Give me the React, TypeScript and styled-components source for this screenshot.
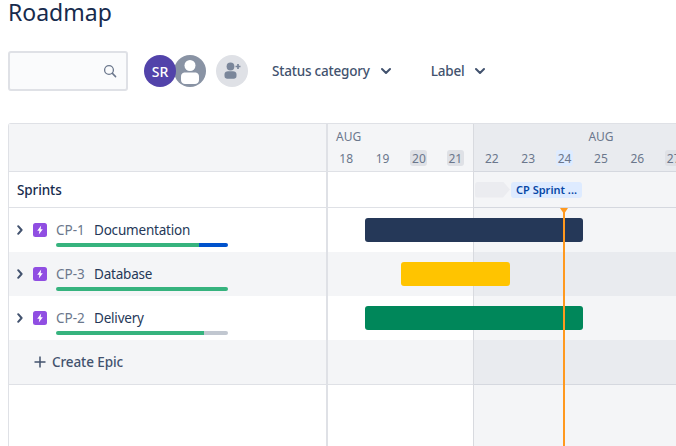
import React from "react";
import styled, { createGlobalStyle } from "styled-components";

const GlobalStyle = createGlobalStyle`
  html, body {
    margin: 0;
    padding: 0;
    height: 100%;
    background: #fff;
    overflow: hidden;
  }
  body {
    font-family: "Noto Sans", "Open Sans", sans-serif;
    color: #172b4d;
  }
`;

const Page = styled.div`
  width: 676px;
  height: 446px;
  padding-left: 8px;
  box-sizing: border-box;
  overflow: hidden;
`;

const Title = styled.h1`
  margin: 0;
  height: 51px;
  font-size: 23px;
  line-height: 24px;
  font-weight: 400;
  color: #172b4d;
`;

const Toolbar = styled.div`
  display: flex;
  align-items: center;
  height: 40px;
`;

const SearchBox = styled.div`
  width: 120px;
  height: 40px;
  box-sizing: border-box;
  border: 2px solid #dfe1e6;
  border-radius: 3px;
  background: #fafbfc;
  display: flex;
  align-items: center;
  justify-content: flex-end;
  padding-right: 9px;
`;

const Avatars = styled.div`
  display: flex;
  margin-left: 16px;
`;

const Avatar = styled.div<{ $bg: string; $overlap?: boolean }>`
  position: relative;
  z-index: ${(p) => (p.$overlap ? 0 : 1)};
  width: 32px;
  height: 32px;
  border-radius: 50%;
  background: ${(p) => p.$bg};
  color: #fff;
  font-size: 14px;
  font-weight: 500;
  display: flex;
  align-items: center;
  justify-content: center;
  overflow: hidden;
  margin-left: ${(p) => (p.$overlap ? "-2px" : "0")};
`;

const AddButton = styled(Avatar)`
  margin-left: 10px;
`;

const Filter = styled.div<{ $gap: number }>`
  display: flex;
  align-items: center;
  gap: 11px;
  margin-left: ${(p) => p.$gap}px;
  font-size: 13.5px;
  letter-spacing: -0.2px;
  font-weight: 500;
  color: #42526e;
`;

const Table = styled.div`
  display: flex;
  margin-top: 32px;
  height: 323px;
  border-top: 1px solid #dfe1e6;
  border-top-left-radius: 3px;
  overflow: hidden;
`;

const LeftPane = styled.div`
  flex: none;
  width: 320px;
  box-sizing: border-box;
  border-left: 1px solid #dfe1e6;
  border-right: 2px solid #dfe1e6;
`;

const Timeline = styled.div`
  position: relative;
  flex: none;
  width: 400px;
`;

const WeekShade = styled.div`
  position: absolute;
  left: 145px;
  top: 0;
  bottom: 0;
  right: 0;
  border-left: 1px solid #d8dadf;
  background: rgba(9, 30, 66, 0.045);
`;

const Row = styled.div<{ $height: number; $grey?: boolean; $line?: boolean }>`
  height: ${(p) => p.$height}px;
  box-sizing: border-box;
  background: ${(p) => (p.$grey ? "#f4f5f7" : "#fff")};
  border-bottom: ${(p) => (p.$line ? "1px solid #dfe1e6" : "none")};
`;

const LabelRow = styled(Row)`
  display: flex;
  align-items: center;
  padding-left: 8px;
  font-size: 13.5px;
  letter-spacing: -0.1px;
  font-weight: 500;
  color: #172b4d;
`;

const EpicRow = styled(Row)`
  padding: 12px 0 0 8px;
`;

const EpicLine = styled.div`
  display: flex;
  align-items: center;
  height: 20px;
  font-size: 13.5px;
`;

const Chevron = styled.svg`
  width: 6px;
  height: 10px;
  flex: none;
`;

const EpicBadge = styled.svg`
  width: 14px;
  height: 14px;
  margin-left: 10px;
  flex: none;
`;

const EpicKey = styled.span`
  margin-left: 9px;
  width: 38px;
  color: #6b778c;
`;

const EpicName = styled.span`
  letter-spacing: -0.2px;
  color: #253858;
`;

const Progress = styled.div`
  display: flex;
  width: 172px;
  height: 4px;
  margin: 3px 0 0 39px;
  border-radius: 2px;
  overflow: hidden;
`;

const ProgressPart = styled.div<{ $color: string; $width: number }>`
  width: ${(p) => p.$width}px;
  background: ${(p) => p.$color};
`;

const CreateRow = styled(Row)`
  display: flex;
  align-items: center;
  gap: 6px;
  padding-left: 25px;
  font-size: 13.5px;
  letter-spacing: -0.1px;
  font-weight: 500;
  color: #42526e;
`;

const HeaderRow = styled(Row)`
  display: flex;
`;

const Period = styled.div<{ $days: number; $center?: boolean }>`
  position: relative;
  z-index: 2;
  width: ${(p) => p.$days * 36.4}px;
  flex: none;
  color: #6b778c;
  font-size: 12px;
  text-align: ${(p) => (p.$center ? "center" : "left")};
`;

const Month = styled.div<{ $center?: boolean }>`
  height: 25px;
  line-height: 25px;
  padding-left: ${(p) => (p.$center ? "0" : "8px")};
`;

const Days = styled.div`
  display: flex;
`;

const Day = styled.div`
  width: 36.4px;
  display: flex;
  justify-content: center;
`;

const DayChip = styled.span<{ $kind?: "weekend" | "today" }>`
  width: 17px;
  height: 16px;
  margin-top: 1px;
  line-height: 17px;
  text-align: center;
  border-radius: 3px;
  background: ${(p) =>
    p.$kind === "weekend" ? "#dfe1e6" : p.$kind === "today" ? "#deebff" : "transparent"};
`;

const SprintRow = styled(Row)`
  position: relative;
  display: flex;
  align-items: center;
  gap: 1px;
  padding-left: 147px;
`;

const SprintGhost = styled.div`
  position: relative;
  z-index: 2;
  width: 35px;
  height: 16px;
  background: #ebecf0;
  border-radius: 3px 0 0 3px;
  clip-path: polygon(0 0, 28px 0, 100% 50%, 28px 100%, 0 100%);
`;

const SprintChip = styled.div`
  position: relative;
  z-index: 2;
  width: 71px;
  height: 16px;
  line-height: 16px;
  text-align: center;
  background: #deebff;
  border-radius: 3px;
  color: #0747a6;
  font-size: 11px;
  font-weight: 600;
  white-space: nowrap;
`;

const BarRow = styled(Row)`
  display: flex;
  align-items: center;
`;

const Bar = styled.div<{ $color: string; $left: number; $width: number }>`
  position: relative;
  z-index: 2;
  height: 24px;
  margin-left: ${(p) => p.$left}px;
  width: ${(p) => p.$width}px;
  border-radius: 3px;
  background: ${(p) => p.$color};
`;

const TodayLine = styled.div`
  position: absolute;
  z-index: 3;
  left: 235px;
  top: 84px;
  bottom: 0;
  width: 2px;
  background: #ff991f;

  &::before {
    content: "";
    position: absolute;
    left: -3px;
    top: 0;
    border-left: 4px solid transparent;
    border-right: 4px solid transparent;
    border-top: 6px solid #ff991f;
  }
`;

const epics = [
  {
    key: "CP-1",
    name: "Documentation",
    parts: [
      { color: "#36b37e", width: 143 },
      { color: "#0052cc", width: 29 },
    ],
    bar: { color: "#253858", left: 37, width: 218 },
  },
  {
    key: "CP-3",
    name: "Database",
    parts: [{ color: "#36b37e", width: 172 }],
    bar: { color: "#ffc400", left: 73, width: 109 },
  },
  {
    key: "CP-2",
    name: "Delivery",
    parts: [
      { color: "#36b37e", width: 148 },
      { color: "#c1c7d0", width: 24 },
    ],
    bar: { color: "#00875a", left: 37, width: 218 },
  },
];

const firstDays = [18, 19, 20, 21];
const secondDays = [22, 23, 24, 25, 26, 27];

const dayKind = (day: number): "weekend" | "today" | undefined => {
  if (day === 24) return "today";
  if (day === 20 || day === 21 || day === 27) return "weekend";
  return undefined;
};

const Caret = () => (
  <svg width="10" height="10" viewBox="0 0 10 10">
    <path d="M1 3 L5 7 L9 3" fill="none" stroke="#42526e" strokeWidth="2" strokeLinecap="round" strokeLinejoin="round" />
  </svg>
);

const App: React.FC = () => {
  return (
    <Page>
      <GlobalStyle />
      <Title>Roadmap</Title>

      <Toolbar>
        <SearchBox>
          <svg width="14" height="14" viewBox="0 0 14 14">
            <circle cx="6" cy="6" r="4.4" fill="none" stroke="#6b778c" strokeWidth="1.3" />
            <path d="M9.4 9.4 L12.6 12.6" stroke="#6b778c" strokeWidth="1.5" strokeLinecap="round" />
          </svg>
        </SearchBox>

        <Avatars>
          <Avatar $bg="#5243aa">SR</Avatar>
          <Avatar $bg="#8993a4" $overlap>
            <svg width="32" height="32" viewBox="0 0 32 32">
              <circle cx="16" cy="10.5" r="5.5" fill="#fff" />
              <path d="M7 22 C7 18.5 9 17.5 11 17.5 H21 C23 17.5 25 18.5 25 22 V25 C25 27.5 23 29 21 29 H11 C9 29 7 27.5 7 25 Z" fill="#fff" />
            </svg>
          </Avatar>
        </Avatars>

        <AddButton $bg="#dfe1e6">
          <svg width="22" height="22" viewBox="0 0 22 22">
            <circle cx="9.5" cy="6.5" r="3.9" fill="#7a869a" />
            <path d="M3.5 14.5 C3.5 12 5 11.2 7 11.2 H12 C14 11.2 15.5 12 15.5 14.5 V16 C15.5 17.8 14.3 18.8 12.8 18.8 H6.2 C4.7 18.8 3.5 17.8 3.5 16 Z" fill="#7a869a" />
            <path d="M17 4 V9 M14.5 6.5 H19.5" stroke="#7a869a" strokeWidth="1.7" />
          </svg>
        </AddButton>

        <Filter $gap={24}>
          Status category
          <Caret />
        </Filter>
        <Filter $gap={40}>
          Label
          <Caret />
        </Filter>
      </Toolbar>

      <Table>
        <LeftPane>
          <Row $height={48} $grey $line />
          <LabelRow $height={36} $line>Sprints</LabelRow>
          {epics.map((epic, i) => (
            <EpicRow key={epic.key} $height={44} $grey={i === 1}>
              <EpicLine>
                <Chevron viewBox="0 0 6 10">
                  <path d="M1.2 1.2 L4.6 5 L1.2 8.8" fill="none" stroke="#42526e" strokeWidth="2" strokeLinecap="round" strokeLinejoin="round" />
                </Chevron>
                <EpicBadge viewBox="0 0 14 14">
                  <rect width="14" height="14" rx="2.5" fill="#904ee2" />
                  <path d="M8.2 2.6 L4.2 7.8 H6.4 L5.8 11.4 L9.8 6.2 H7.6 Z" fill="#fff" />
                </EpicBadge>
                <EpicKey>{epic.key}</EpicKey>
                <EpicName>{epic.name}</EpicName>
              </EpicLine>
              <Progress>
                {epic.parts.map((part) => (
                  <ProgressPart key={part.color} $color={part.color} $width={part.width} />
                ))}
              </Progress>
            </EpicRow>
          ))}
          <CreateRow $height={45} $grey $line>
            <svg width="12" height="12" viewBox="0 0 12 12">
              <path d="M6 0.5 V11.5 M0.5 6 H11.5" stroke="#42526e" strokeWidth="1.5" />
            </svg>
            Create Epic
          </CreateRow>
        </LeftPane>

        <Timeline>
          <HeaderRow $height={48} $grey $line>
            <Period $days={4}>
              <Month>AUG</Month>
              <Days>
                {firstDays.map((day) => (
                  <Day key={day}>
                    <DayChip $kind={dayKind(day)}>{day}</DayChip>
                  </Day>
                ))}
              </Days>
            </Period>
            <Period $days={7} $center>
              <Month $center>AUG</Month>
              <Days>
                {secondDays.map((day) => (
                  <Day key={day}>
                    <DayChip $kind={dayKind(day)}>{day}</DayChip>
                  </Day>
                ))}
              </Days>
            </Period>
          </HeaderRow>

          <SprintRow $height={36} $line>
            <SprintGhost />
            <SprintChip>CP Sprint ...</SprintChip>
          </SprintRow>

          {epics.map((epic, i) => (
            <BarRow key={epic.key} $height={44} $grey={i === 1}>
              <Bar $color={epic.bar.color} $left={epic.bar.left} $width={epic.bar.width} />
            </BarRow>
          ))}
          <Row $height={45} $grey $line />

          <WeekShade />
          <TodayLine />
        </Timeline>
      </Table>
    </Page>
  );
};

export default App;
